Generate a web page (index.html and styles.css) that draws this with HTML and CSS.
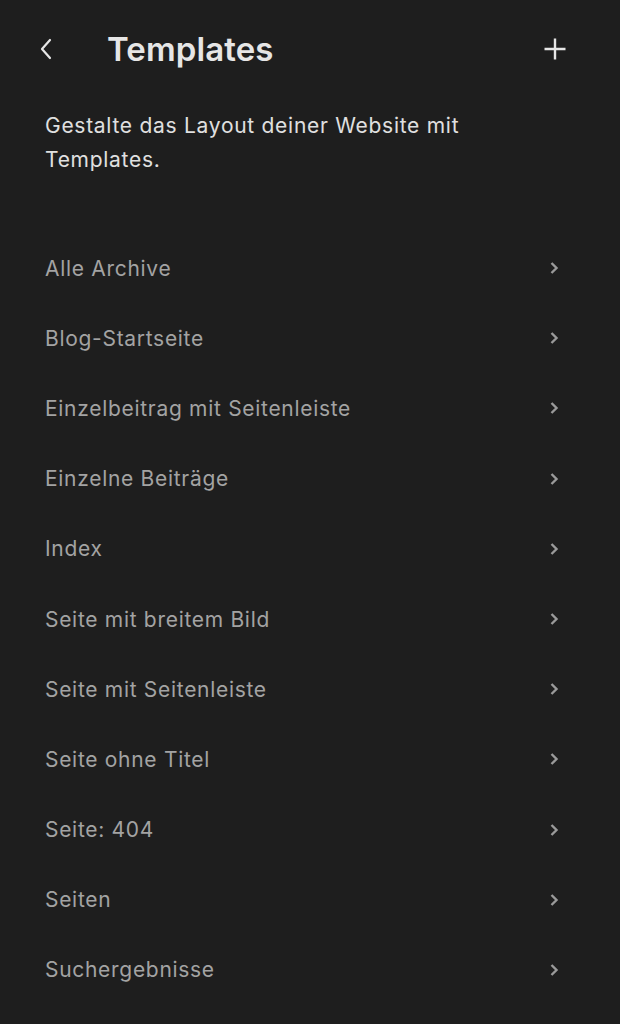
FILE: index.html
```html
<!DOCTYPE html>
<html lang="de">
<head>
<meta charset="utf-8">
<title>Templates</title>
<link rel="stylesheet" href="styles.css">
</head>
<body>
<div class="panel">
  <header class="header">
    <button class="icon-btn back" aria-label="Zurück">
      <svg width="14" height="22" viewBox="0 0 14 22"><path d="M11 2 L3 11 L11 20" fill="none" stroke="#e6e6e6" stroke-width="2.2" stroke-linecap="round" stroke-linejoin="round"/></svg>
    </button>
    <h1 class="title">Templates</h1>
    <button class="icon-btn add" aria-label="Hinzufügen">
      <svg width="24" height="24" viewBox="0 0 24 24"><path d="M12 1.5 V22.5 M1.5 12 H22.5" fill="none" stroke="#e6e6e6" stroke-width="2.4"/></svg>
    </button>
  </header>
  <p class="desc">Gestalte das Layout deiner Website mit Templates.</p>
  <ul class="list">
    <li class="item"><span>Alle Archive</span><svg class="chev" width="10" height="14" viewBox="0 0 10 14"><path d="M2.5 2 L7.5 7 L2.5 12" fill="none" stroke="#9a9a9a" stroke-width="2.4"/></svg></li>
    <li class="item"><span>Blog-Startseite</span><svg class="chev" width="10" height="14" viewBox="0 0 10 14"><path d="M2.5 2 L7.5 7 L2.5 12" fill="none" stroke="#9a9a9a" stroke-width="2.4"/></svg></li>
    <li class="item"><span>Einzelbeitrag mit Seitenleiste</span><svg class="chev" width="10" height="14" viewBox="0 0 10 14"><path d="M2.5 2 L7.5 7 L2.5 12" fill="none" stroke="#9a9a9a" stroke-width="2.4"/></svg></li>
    <li class="item"><span>Einzelne Beiträge</span><svg class="chev" width="10" height="14" viewBox="0 0 10 14"><path d="M2.5 2 L7.5 7 L2.5 12" fill="none" stroke="#9a9a9a" stroke-width="2.4"/></svg></li>
    <li class="item"><span>Index</span><svg class="chev" width="10" height="14" viewBox="0 0 10 14"><path d="M2.5 2 L7.5 7 L2.5 12" fill="none" stroke="#9a9a9a" stroke-width="2.4"/></svg></li>
    <li class="item"><span>Seite mit breitem Bild</span><svg class="chev" width="10" height="14" viewBox="0 0 10 14"><path d="M2.5 2 L7.5 7 L2.5 12" fill="none" stroke="#9a9a9a" stroke-width="2.4"/></svg></li>
    <li class="item"><span>Seite mit Seitenleiste</span><svg class="chev" width="10" height="14" viewBox="0 0 10 14"><path d="M2.5 2 L7.5 7 L2.5 12" fill="none" stroke="#9a9a9a" stroke-width="2.4"/></svg></li>
    <li class="item"><span>Seite ohne Titel</span><svg class="chev" width="10" height="14" viewBox="0 0 10 14"><path d="M2.5 2 L7.5 7 L2.5 12" fill="none" stroke="#9a9a9a" stroke-width="2.4"/></svg></li>
    <li class="item"><span>Seite: 404</span><svg class="chev" width="10" height="14" viewBox="0 0 10 14"><path d="M2.5 2 L7.5 7 L2.5 12" fill="none" stroke="#9a9a9a" stroke-width="2.4"/></svg></li>
    <li class="item"><span>Seiten</span><svg class="chev" width="10" height="14" viewBox="0 0 10 14"><path d="M2.5 2 L7.5 7 L2.5 12" fill="none" stroke="#9a9a9a" stroke-width="2.4"/></svg></li>
    <li class="item"><span>Suchergebnisse</span><svg class="chev" width="10" height="14" viewBox="0 0 10 14"><path d="M2.5 2 L7.5 7 L2.5 12" fill="none" stroke="#9a9a9a" stroke-width="2.4"/></svg></li>
  </ul>
</div>
</body>
</html>
```
FILE: styles.css
```css
html, body {
  margin: 0;
  padding: 0;
  background: #1e1e1e;
  height: 100%;
  overflow: hidden;
}
body {
  font-family: Inter, "Noto Sans", sans-serif;
  -webkit-font-smoothing: antialiased;
}
.panel {
  padding: 0 0 0 45px;
}
.header {
  display: flex;
  align-items: center;
  height: 50px;
  margin-top: 24px;
  margin-left: -6px;
  padding-right: 53px;
}
.icon-btn {
  background: none;
  border: 0;
  padding: 0;
  display: flex;
  align-items: center;
  justify-content: center;
}
.back {
  width: 14px;
  height: 22px;
}
.title {
  margin: 0 0 0 54px;
  font-size: 33px;
  font-weight: 600;
  color: #e6e6e6;
  letter-spacing: 0.1px;
  flex: 1;
}
.add {
  width: 24px;
  height: 24px;
}
.desc {
  margin: 35px 0 0 0;
  width: 470px;
  font-size: 21px;
  line-height: 34px;
  letter-spacing: 0.72px;
  color: #e0e0e0;
}
.list {
  list-style: none;
  margin: 56px 0 0 0;
  padding: 0 61px 0 0;
}
.item {
  display: flex;
  align-items: center;
  justify-content: space-between;
  height: 70.2px;
  font-size: 21px;
  letter-spacing: 0.7px;
  color: #a3a3a3;
}
.chev {
  display: block;
}
```
